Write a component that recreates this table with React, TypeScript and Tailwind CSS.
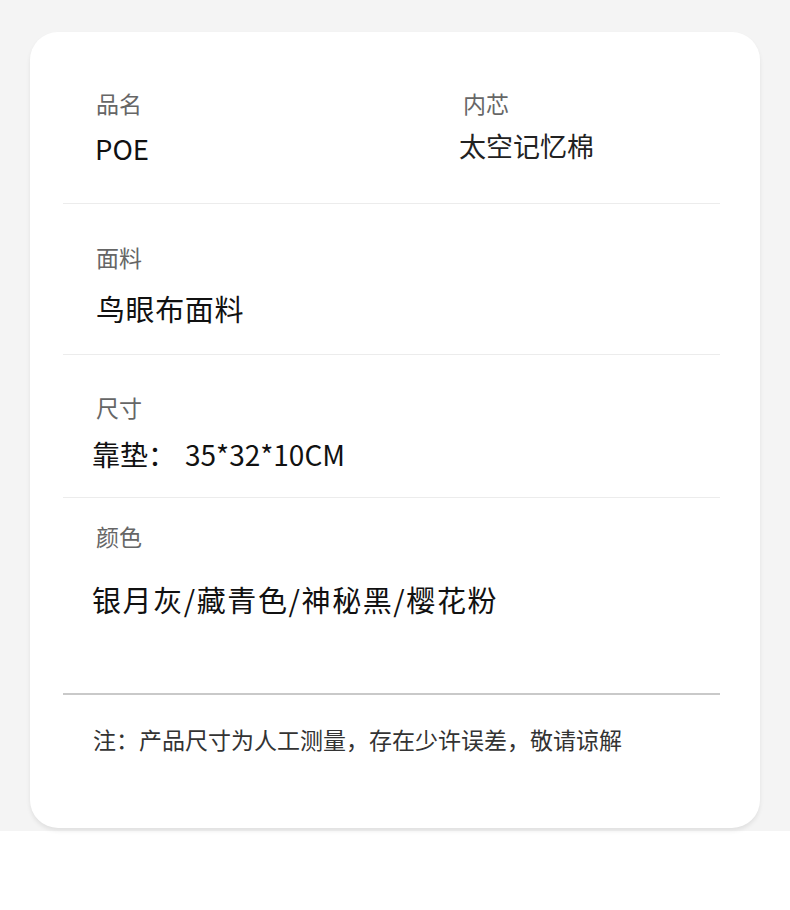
import React from 'react';

const font = { fontFamily: '"Noto Sans CJK SC", "Noto Sans", sans-serif' };

const Label = ({ children, className = '' }: { children: React.ReactNode; className?: string }) => (
  <div className={`text-[23px] leading-[30px] text-[#666] ${className}`}>{children}</div>
);

export default function App() {
  return (
    <div className="w-[790px] min-h-[910px] bg-white" style={font}>
      <div className="bg-[#f4f4f4] h-[831px] pt-[32px] pl-[30px]">
        <div className="w-[730px] h-[796px] bg-white rounded-[28px] shadow-[0_3px_4px_rgba(0,0,0,0.08)] pl-[33px] pr-[40px] flex flex-col">
          {/* 品名 / 内芯 */}
          <div className="h-[172px] border-b border-[#ececec] pt-[56px] pl-[33px] grid grid-cols-[363px_1fr]">
            <div className="flex flex-col gap-[12px]">
              <Label>品名</Label>
              <div className="text-[27.5px] leading-[36px] text-[#111] -ml-[1px]">POE</div>
            </div>
            <div className="flex flex-col gap-[10px]">
              <Label className="ml-[4px]">内芯</Label>
              <div className="text-[27px] leading-[36px] text-[#222]">太空记忆棉</div>
            </div>
          </div>

          {/* 面料 */}
          <div className="h-[151px] border-b border-[#ececec] pt-[38px] pl-[33px] flex flex-col gap-[18px]">
            <Label>面料</Label>
            <div className="text-[29px] leading-[36px] text-[#111] tracking-[0.6px]">鸟眼布面料</div>
          </div>

          {/* 尺寸 */}
          <div className="h-[143px] border-b border-[#ececec] pt-[37px] pl-[33px] flex flex-col gap-[14px]">
            <Label>尺寸</Label>
            <div className="text-[28px] leading-[36px] text-[#111] -ml-[4px]">
              靠垫：<span className="ml-[9px]">35*32*10CM</span>
            </div>
          </div>

          {/* 颜色 */}
          <div className="h-[197px] border-b-2 border-[#c9c9c9] pt-[23px] pl-[33px] flex flex-col gap-[28px]">
            <Label>颜色</Label>
            <div className="text-[29px] leading-[40px] text-[#111] tracking-[1.6px] -ml-[4px]">银月灰/藏青色/神秘黑/樱花粉</div>
          </div>

          {/* 注 */}
          <div className="pt-[29px] pl-[30px]">
            <div className="text-[23px] leading-[30px] text-[#333]">注：产品尺寸为人工测量，存在少许误差，敬请谅解</div>
          </div>
        </div>
      </div>
    </div>
  );
}
